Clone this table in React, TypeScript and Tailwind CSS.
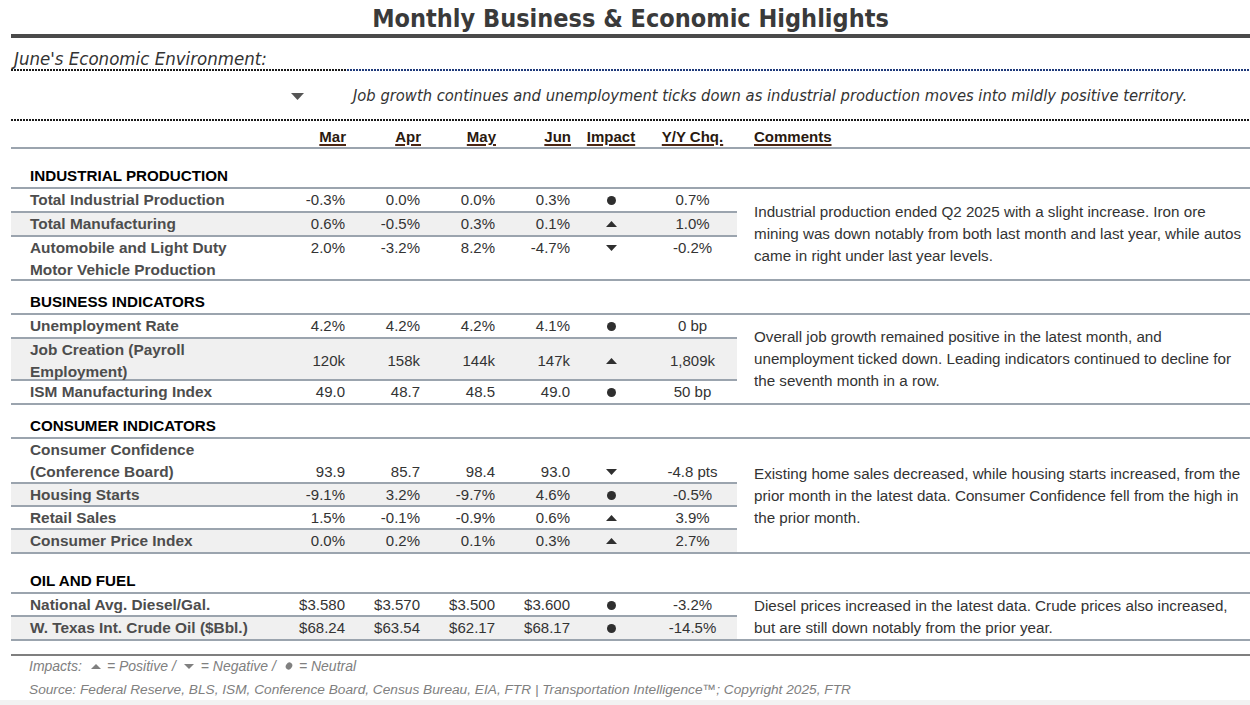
import React from 'react'

type Impact = 'up' | 'down' | 'neutral'

type Row = {
  label: string[]
  v: string[]
  impact: Impact
  yy: string
  h: string
  shade?: boolean
  last?: boolean
  align?: string
}

type Section = {
  title: string
  mt: string
  comment: string[]
  rows: Row[]
}

const sections: Section[] = [
  {
    title: 'INDUSTRIAL PRODUCTION',
    mt: 'mt-[16px]',
    comment: [
      'Industrial production ended Q2 2025 with a slight increase. Iron ore',
      'mining was down notably from both last month and last year, while autos',
      'came in right under last year levels.',
    ],
    rows: [
      { label: ['Total Industrial Production'], v: ['-0.3%', '0.0%', '0.0%', '0.3%'], impact: 'neutral', yy: '0.7%', h: 'h-[24px]' },
      { label: ['Total Manufacturing'], v: ['0.6%', '-0.5%', '0.3%', '0.1%'], impact: 'up', yy: '1.0%', h: 'h-[24px]', shade: true },
      { label: ['Automobile and Light Duty', 'Motor Vehicle Production'], v: ['2.0%', '-3.2%', '8.2%', '-4.7%'], impact: 'down', yy: '-0.2%', h: 'h-[42px]', last: true, align: 'items-start' },
    ],
  },
  {
    title: 'BUSINESS INDICATORS',
    mt: 'mt-[10px]',
    comment: [
      'Overall job growth remained positive in the latest month, and',
      'unemployment ticked down. Leading indicators continued to decline for',
      'the seventh month in a row.',
    ],
    rows: [
      { label: ['Unemployment Rate'], v: ['4.2%', '4.2%', '4.2%', '4.1%'], impact: 'neutral', yy: '0 bp', h: 'h-[24px]' },
      { label: ['Job Creation (Payroll', 'Employment)'], v: ['120k', '158k', '144k', '147k'], impact: 'up', yy: '1,809k', h: 'h-[42px]', shade: true },
      { label: ['ISM Manufacturing Index'], v: ['49.0', '48.7', '48.5', '49.0'], impact: 'neutral', yy: '50 bp', h: 'h-[22px]', last: true },
    ],
  },
  {
    title: 'CONSUMER INDICATORS',
    mt: 'mt-[10px]',
    comment: [
      'Existing home sales decreased, while housing starts increased, from the',
      'prior month in the latest data. Consumer Confidence fell from the high in',
      'the prior month.',
    ],
    rows: [
      { label: ['Consumer Confidence', '(Conference Board)'], v: ['93.9', '85.7', '98.4', '93.0'], impact: 'down', yy: '-4.8 pts', h: 'h-[45px]', align: 'items-end' },
      { label: ['Housing Starts'], v: ['-9.1%', '3.2%', '-9.7%', '4.6%'], impact: 'neutral', yy: '-0.5%', h: 'h-[23px]', shade: true },
      { label: ['Retail Sales'], v: ['1.5%', '-0.1%', '-0.9%', '0.6%'], impact: 'up', yy: '3.9%', h: 'h-[23px]' },
      { label: ['Consumer Price Index'], v: ['0.0%', '0.2%', '0.1%', '0.3%'], impact: 'up', yy: '2.7%', h: 'h-[22px]', shade: true, last: true },
    ],
  },
  {
    title: 'OIL AND FUEL',
    mt: 'mt-[16px]',
    comment: [
      'Diesel prices increased in the latest data. Crude prices also increased,',
      'but are still down notably from the prior year.',
    ],
    rows: [
      { label: ['National Avg. Diesel/Gal.'], v: ['$3.580', '$3.570', '$3.500', '$3.600'], impact: 'neutral', yy: '-3.2%', h: 'h-[23px]' },
      { label: ['W. Texas Int. Crude Oil ($Bbl.)'], v: ['$68.24', '$63.54', '$62.17', '$68.17'], impact: 'neutral', yy: '-14.5%', h: 'h-[22px]', shade: true, last: true },
    ],
  },
]

const cols = 'grid grid-cols-[263px_75px_75px_75px_75px_74px_89px]'

const ImpactIcon = ({ kind }: { kind: Impact }) => {
  if (kind === 'neutral') return <span className="block h-[9px] w-[9px] rounded-full bg-[#2f2f2f]" />
  return (
    <svg width="11" height="6" viewBox="0 0 11 6">
      {kind === 'up' ? <polygon points="5.5,0 11,6 0,6" fill="#2f2f2f" /> : <polygon points="0,0 11,0 5.5,6" fill="#2f2f2f" />}
    </svg>
  )
}

const DataRow = ({ row }: { row: Row }) => (
  <div
    className={`${cols} ${row.h} ${row.align ?? 'items-center'} ${row.shade ? 'bg-[#f0f0f0]' : ''} ${
      row.last ? '' : 'border-b-2 border-[#9ba4ae]'
    } text-[15px] leading-[22px]`}
  >
    <div className="pl-[19px] text-[15.4px] font-bold text-[#4d4d4d]">
      {row.label.map((l) => (
        <div key={l} className="whitespace-nowrap">
          {l}
        </div>
      ))}
    </div>
    {row.v.map((x, i) => (
      <div key={i} className="pr-[4px] text-right text-[#333]">
        {x}
      </div>
    ))}
    <div className="flex h-[22px] items-center justify-center">
      <ImpactIcon kind={row.impact} />
    </div>
    <div className="text-center text-[#333]">{row.yy}</div>
  </div>
)

const dotsBlack = 'h-[2px] bg-[repeating-linear-gradient(to_right,#1a1a1a_0_2px,transparent_2px_3px)]'
const headLink = 'underline decoration-[#4a2512] decoration-[1.5px] underline-offset-[2px]'

export default function App() {
  return (
    <div className="h-[705px] w-[1250px] overflow-hidden bg-white font-['Liberation_Sans',Arial,sans-serif] text-[#333]">
      <div className="pl-[11px]">
        {/* title */}
        <div className="flex h-[34px] items-center justify-center pt-[3px] font-['DejaVu_Sans_Condensed','DejaVu_Sans',sans-serif] text-[25px] font-bold text-[#3a3a3a] [font-stretch:condensed]">
          Monthly Business &amp; Economic Highlights
        </div>
        <div className="h-[4px] bg-[#4a4a4a]" />

        {/* environment */}
        <div className="flex h-[31px] items-end pl-[3px] font-['DejaVu_Sans_Condensed','DejaVu_Sans',sans-serif] text-[18.5px] italic leading-[20px] text-[#333] [font-stretch:condensed]">
          June's Economic Environment:
        </div>
        <div className="flex h-[2px]">
          <div className={`${dotsBlack} w-[336px]`} />
          <div className="h-[2px] flex-1 bg-[repeating-linear-gradient(to_right,#1f3a7a_0_2px,transparent_2px_3px)]" />
        </div>
        <div className="flex h-[48px] items-center pt-[2px] font-['DejaVu_Sans_Condensed','DejaVu_Sans',sans-serif] text-[16.4px] italic text-[#333] [font-stretch:condensed]">
          <svg className="ml-[280px] mr-[49px]" width="13" height="7" viewBox="0 0 13 7">
            <polygon points="0,0 13,0 6.5,7" fill="#555" />
          </svg>
          <span className="whitespace-nowrap">
            Job growth continues and unemployment ticks down as industrial production moves into mildly positive territory.
          </span>
        </div>
        <div className={dotsBlack} />

        {/* column header */}
        <div className="flex h-[28px] border-b-2 border-[#9ba4ae] text-[15px] font-bold leading-[20px] text-[#2a1a10]">
          <div className={`${cols} w-[726px] items-end`}>
            <div />
            {['Mar', 'Apr', 'May', 'Jun'].map((m) => (
              <div key={m} className="pr-[3px] text-right">
                <span className={headLink}>{m}</span>
              </div>
            ))}
            <div className="text-center">
              <span className={headLink}>Impact</span>
            </div>
            <div className="text-center">
              <span className={headLink}>Y/Y Chq.</span>
            </div>
          </div>
          <div className="flex items-end pl-[17px]">
            <span className={headLink}>Comments</span>
          </div>
        </div>

        {sections.map((s) => (
          <div key={s.title} className={s.mt}>
            <div className="h-[24px] border-b-2 border-[#9ba4ae] pl-[19px] text-[15.2px] font-bold leading-[22px] text-black">
              {s.title}
            </div>
            <div className="flex border-b-2 border-[#9ba4ae]">
              <div className="w-[726px]">
                {s.rows.map((r) => (
                  <DataRow key={r.label[0]} row={r} />
                ))}
              </div>
              <div className="flex flex-1 items-center pl-[17px] text-[15.2px] leading-[22px] text-[#333]">
                <div>
                  {s.comment.map((c) => (
                    <div key={c} className="whitespace-nowrap">
                      {c}
                    </div>
                  ))}
                </div>
              </div>
            </div>
          </div>
        ))}

        <div className="mt-[13px] h-[2px] bg-[#7f7f7f]" />
        <div className="flex h-[20px] items-center pl-[18px] text-[14px] italic leading-[20px] text-[#808080]">
          <span>Impacts:</span>
          <svg className="ml-[9px] mr-[6px]" width="10" height="5" viewBox="0 0 10 5">
            <polygon points="5,0 10,5 0,5" fill="#808080" />
          </svg>
          <span>= Positive /</span>
          <svg className="ml-[8px] mr-[7px]" width="10" height="5" viewBox="0 0 10 5">
            <polygon points="0,0 10,0 5,5" fill="#808080" />
          </svg>
          <span>= Negative /</span>
          <svg className="ml-[9px] mr-[6px]" width="8" height="8" viewBox="0 0 8 8">
            <ellipse cx="4" cy="4" rx="3" ry="3.7" transform="rotate(35 4 4)" fill="#808080" />
          </svg>
          <span>= Neutral</span>
        </div>
        <div className="mt-[4px] h-[20px] whitespace-nowrap pl-[18px] text-[13.7px] italic leading-[20px] text-[#808080]">
          Source: Federal Reserve, BLS, ISM, Conference Board, Census Bureau, EIA, FTR | Transportation Intelligence™; Copyright 2025, FTR
        </div>
      </div>
      <div className="h-[5px] bg-[#f2f2f2]" />
    </div>
  )
}
